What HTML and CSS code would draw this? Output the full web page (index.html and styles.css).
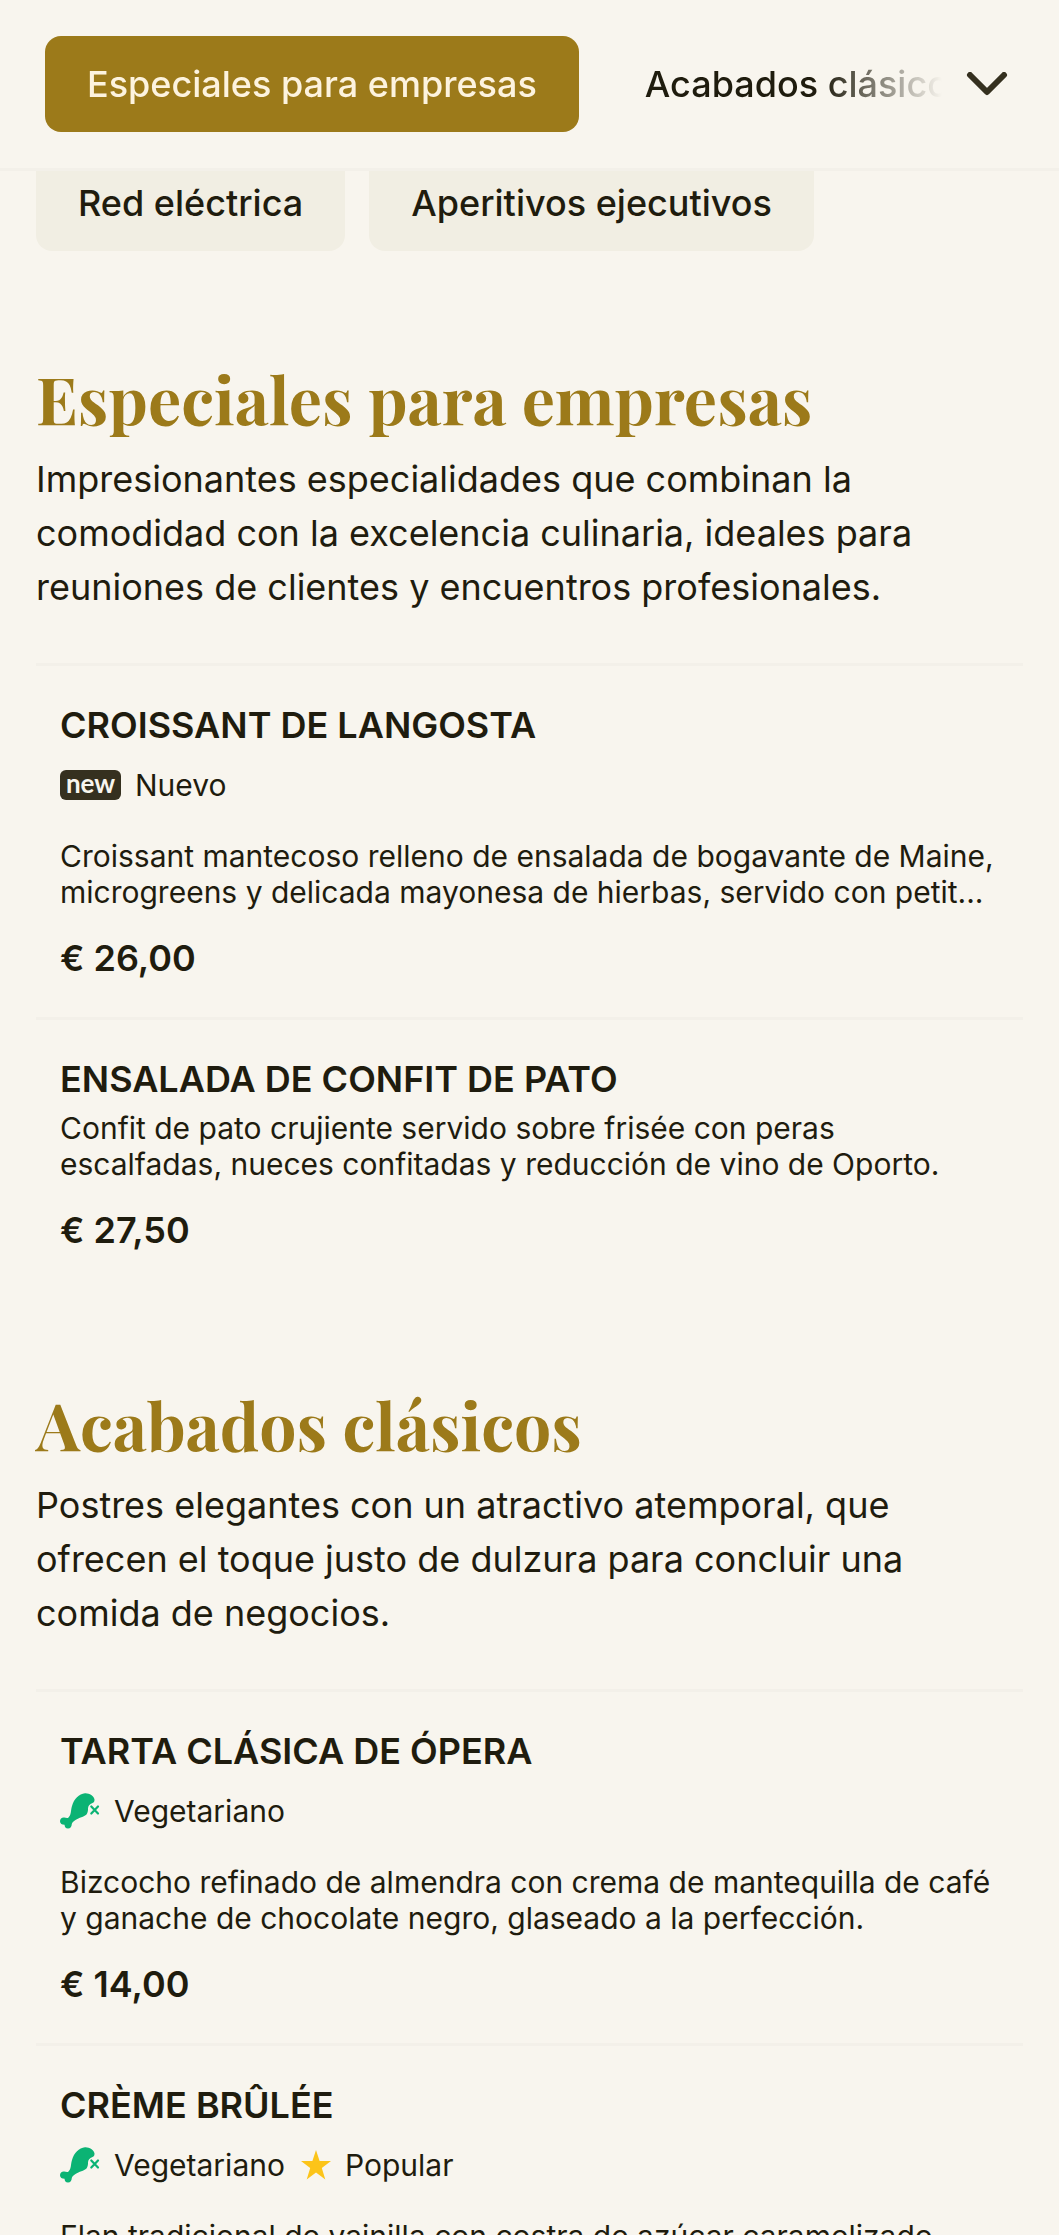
FILE: index.html
```html
<!DOCTYPE html>
<html lang="es">
<head>
<meta charset="utf-8">
<meta name="viewport" content="width=device-width, initial-scale=1">
<title>Menú</title>
<link rel="stylesheet" href="styles.css">
</head>
<body>
<svg class="sprite" aria-hidden="true">
  <symbol id="veg" viewBox="0 0 40 36">
    <path fill="#0bb374" d="M25 0.300C29 0 34 3 34.500 6.500C34.600 8 34 9.500 32.500 10C29.500 11 28 13 28 15.500C28.200 17.500 27.500 20 26.500 21.500C24 24 19 24.500 15.500 27C13.500 28.500 12 29.500 11.800 31C11.700 33.500 10.500 35.500 8 35.600C5.500 35.600 4.800 34 4.500 31.800C2 31.800 0 30.500 0 28.200C0 25.800 2 24.300 4.200 24.600C6 24.900 7.500 25.500 8.500 24.500C11.500 21.500 10.500 18 12 13C14 6 19 0.800 25 0.300Z"/>
    <path fill="none" stroke="#0bb374" stroke-width="2.200" stroke-linecap="round" d="M31.300 13.500L38 20.500M38 13.500L31.300 20.500"/>
  </symbol>
  <symbol id="star" viewBox="0 0 30 30">
    <path fill="#fcc419" d="M15 0L18.600 11H30L20.800 18L24.300 29.500L15 22.500L5.700 29.500L9.200 18L0 11H11.400Z"/>
  </symbol>
</svg>
<div class="page">
  <header class="topbar">
    <nav class="tabs" aria-label="Categorías">
      <a class="tab tab-active" href="#especiales" aria-current="true">Especiales para empresas</a>
      <a class="tab" href="#acabados">Acabados clásicos</a>
    </nav>
    <button class="expand" type="button" aria-label="Ver todas las categorías">
      <svg width="42" height="24" viewBox="0 0 42 24" fill="none" stroke="#35301f" stroke-width="6" stroke-linecap="round" stroke-linejoin="round"><path d="M4 3L21 20L38 3"/></svg>
    </button>
  </header>
  <main class="content">
    <div class="chips">
      <a class="chip" href="#red">Red eléctrica</a>
      <a class="chip" href="#aperitivos">Aperitivos ejecutivos</a>
    </div>
    <section class="category" id="especiales">
      <h2 class="category-title">Especiales para empresas</h2>
      <p class="intro">Impresionantes especialidades que combinan la comodidad con la excelencia culinaria, ideales para reuniones de clientes y encuentros profesionales.</p>
      <article class="item">
        <h3 class="item-title">CROISSANT DE LANGOSTA</h3>
        <div class="tags"><span class="tag"><span class="badge" aria-hidden="true">new</span>Nuevo</span></div>
        <p class="description">Croissant mantecoso relleno de ensalada de bogavante de Maine, microgreens y delicada mayonesa de hierbas, servido con petit...</p>
        <p class="price">€ 26,00</p>
      </article>
      <article class="item">
        <h3 class="item-title">ENSALADA DE CONFIT DE PATO</h3>
        <p class="description">Confit de pato crujiente servido sobre frisée con peras escalfadas, nueces confitadas y reducción de vino de Oporto.</p>
        <p class="price">€ 27,50</p>
      </article>
    </section>
    <section class="category" id="acabados">
      <h2 class="category-title">Acabados clásicos</h2>
      <p class="intro">Postres elegantes con un atractivo atemporal, que ofrecen el toque justo de dulzura para concluir una comida de negocios.</p>
      <article class="item">
        <h3 class="item-title">TARTA CLÁSICA DE ÓPERA</h3>
        <div class="tags"><span class="tag"><svg class="icon-veg"><use href="#veg"/></svg>Vegetariano</span></div>
        <p class="description">Bizcocho refinado de almendra con crema de mantequilla de café y ganache de chocolate negro, glaseado a la perfección.</p>
        <p class="price">€ 14,00</p>
      </article>
      <article class="item">
        <h3 class="item-title">CRÈME BRÛLÉE</h3>
        <div class="tags"><span class="tag"><svg class="icon-veg"><use href="#veg"/></svg>Vegetariano</span><span class="tag"><svg class="icon-star"><use href="#star"/></svg>Popular</span></div>
        <p class="description">Flan tradicional de vainilla con costra de azúcar caramelizado.</p>
      </article>
    </section>
  </main>
</div>
</body>
</html>
```
FILE: styles.css
```css
* { box-sizing: border-box; }
body, h2, h3, p { margin: 0; }
body {
  background: #f8f5ee;
  color: #1f1c0e;
  font-family: Inter, "Liberation Sans", sans-serif;
  font-size: 30px;
  line-height: 36px;
}
.sprite { display: none; }
.page {
  height: 100vh;
  overflow-y: auto;
  scrollbar-width: none;
}
.topbar {
  position: sticky;
  top: 0;
  z-index: 1;
  display: flex;
  align-items: center;
  padding: 36px 51px 36px 45px;
  background: #f8f5ee;
  border-bottom: 3px solid #f3f0e9;
}
.tabs {
  flex: 1;
  display: flex;
  gap: 24px;
  overflow: hidden;
  mask-image: linear-gradient(to right, #000 calc(100% - 120px), transparent);
}
.tab, .chip {
  flex: none;
  padding: 24px 42px;
  border-radius: 16px;
  color: inherit;
  font-size: 36px;
  font-weight: 500;
  line-height: 48px;
  text-decoration: none;
}
.tab-active { background: #9c7a1a; color: #fdf3de; }
.expand {
  display: flex;
  margin-left: 24px;
  padding: 0;
  border: 0;
  background: none;
}
.content {
  margin-top: -16px;
  padding: 0 36px;
}
.chips { display: flex; gap: 24px; padding-bottom: 12px; }
.chip { background: #f1eee3; }
.category { padding-top: 96px; }
.category-title {
  color: #9c7a1a;
  font-family: "Playfair Display", "Liberation Serif", serif;
  font-size: 66px;
  font-weight: 700;
  line-height: 78px;
}
.intro {
  max-width: 920px;
  margin: 15px 0 49px;
  font-size: 36px;
  line-height: 54px;
}
.item {
  padding: 35px 24px;
  border-top: 3px solid #f3f0e9;
}
.item-title, .price {
  font-size: 36px;
  font-weight: 600;
  line-height: 48px;
}
.item-title + .description { margin-top: 7px; }
.price { margin-top: 24px; }
.tags {
  display: flex;
  gap: 16px;
  padding: 18px 0 35px;
}
.tag { display: flex; align-items: center; gap: 14px; }
.badge {
  width: 61px;
  height: 30px;
  border-radius: 6px;
  background: #35301f;
  color: #f8f5ee;
  font-family: Lato, sans-serif;
  font-size: 26px;
  font-weight: 700;
  line-height: 26px;
  text-align: center;
}
.icon-veg { width: 40px; height: 36px; }
.icon-star { width: 30px; height: 30px; }
```
